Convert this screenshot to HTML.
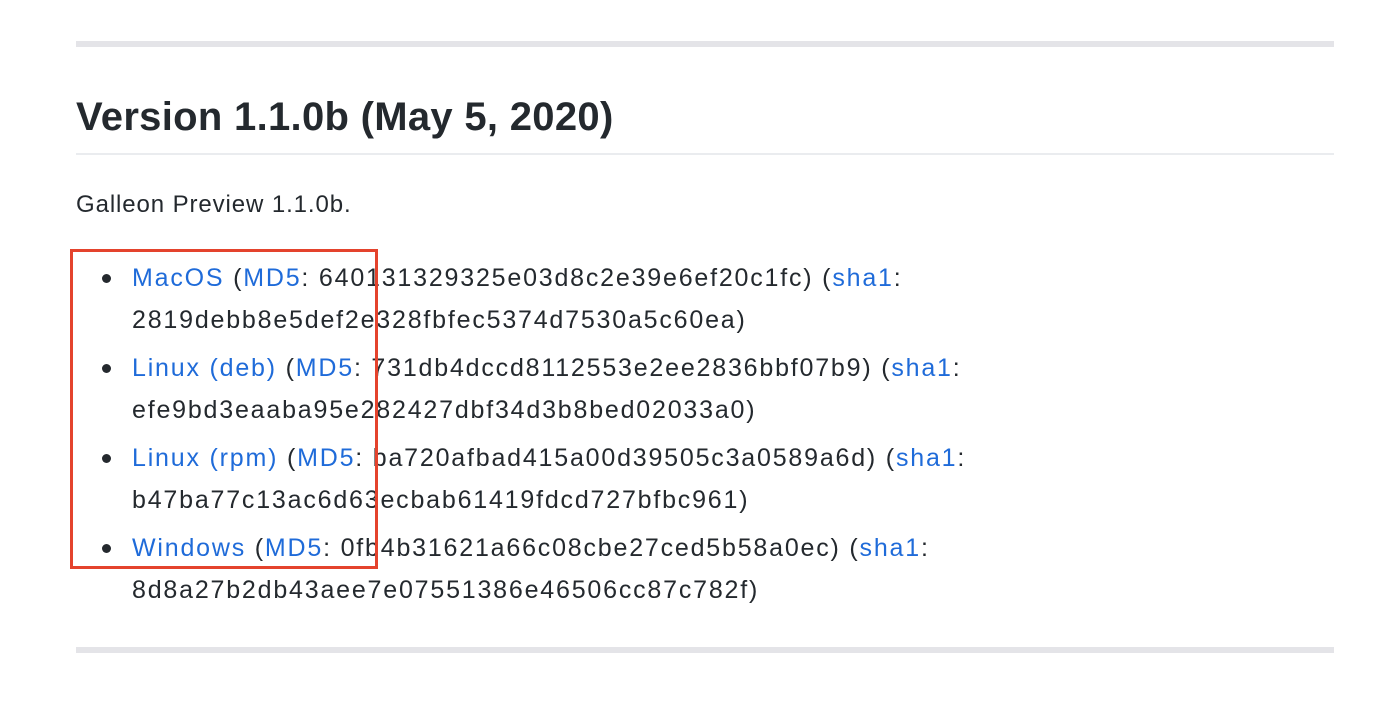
<!DOCTYPE html>
<html><head><style>
body{margin:0;width:1400px;height:707px;background:#fff;font-family:"Liberation Sans",Arial,sans-serif;color:#24292e;position:relative;overflow:hidden}
.bar{position:absolute;left:76px;width:1258px;height:6px;background:#e4e4e8}
h1{position:absolute;left:76px;top:92px;margin:0;font-size:40px;font-weight:bold;letter-spacing:0.3px;line-height:50px}
.hr{position:absolute;left:76px;top:153px;width:1258px;height:2px;background:#eaecef}
p{position:absolute;left:76px;top:189px;margin:0;font-size:24px;letter-spacing:0.9px;line-height:32px}
ul{position:absolute;left:132px;top:257px;margin:0;padding:0;list-style:none;font-size:25px;letter-spacing:1.8px;line-height:42px}
li{position:relative;margin-bottom:6px;white-space:nowrap}
li:before{content:"";position:absolute;left:-30px;top:17px;width:9px;height:9px;border-radius:50%;background:#24292e}
a{color:#1f6bd9;text-decoration:none}
.box{position:absolute;left:70px;top:249px;width:302px;height:314px;border:3px solid #e4432d}
</style></head><body>
<div class="bar" style="top:41px"></div>
<h1>Version 1.1.0b (May 5, 2020)</h1>
<div class="hr"></div>
<p>Galleon Preview 1.1.0b.</p>
<ul>
<li><a>MacOS</a> (<a>MD5</a>: 640131329325e03d8c2e39e6ef20c1fc) (<a>sha1</a>:<br>2819debb8e5def2e328fbfec5374d7530a5c60ea)</li>
<li><a>Linux (deb)</a> (<a>MD5</a>: 731db4dccd8112553e2ee2836bbf07b9) (<a>sha1</a>:<br>efe9bd3eaaba95e282427dbf34d3b8bed02033a0)</li>
<li><a>Linux (rpm)</a> (<a>MD5</a>: ba720afbad415a00d39505c3a0589a6d) (<a>sha1</a>:<br>b47ba77c13ac6d63ecbab61419fdcd727bfbc961)</li>
<li><a>Windows</a> (<a>MD5</a>: 0fb4b31621a66c08cbe27ced5b58a0ec) (<a>sha1</a>:<br>8d8a27b2db43aee7e07551386e46506cc87c782f)</li>
</ul>
<div class="box"></div>
<div class="bar" style="top:647px"></div>
</body></html>
